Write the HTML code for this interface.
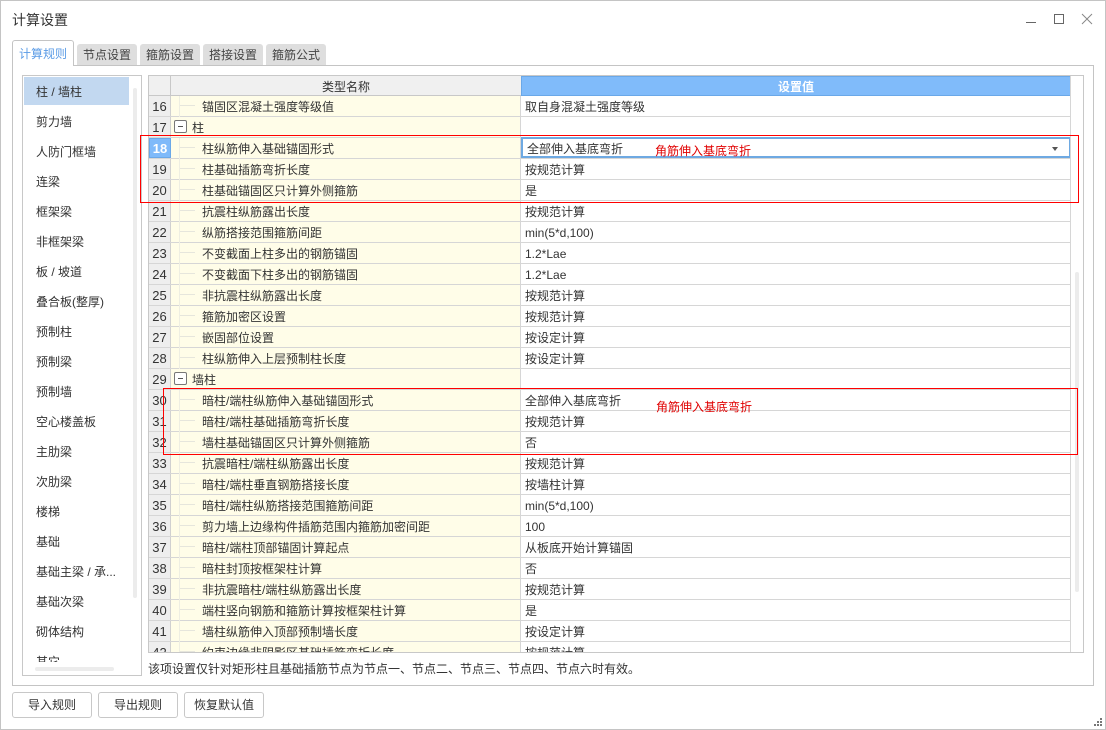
<!DOCTYPE html>
<html lang="zh-CN">
<head>
<meta charset="utf-8">
<title>计算设置</title>
<style>
html,body{margin:0;padding:0;background:#fff}
body{width:1106px;height:730px;overflow:hidden;position:relative;font-family:"Liberation Sans","Noto Sans CJK SC",sans-serif;font-size:12px;color:#333}
.a{position:absolute;box-sizing:border-box}
#win{left:0;top:0;width:1106px;height:730px;border:1px solid #c4c4c4}
.tab{position:absolute;top:44px;width:60px;height:21px;background:#dedede;border-radius:3px 3px 0 0;text-align:center;line-height:22px;color:#444}
#act{left:12px;top:40px;width:62px;height:26px;background:#fff;border:1px solid #c4c4c4;border-bottom:0;border-radius:3px 3px 0 0;text-align:center;line-height:27px;color:#5a9be6;z-index:2}
#panel{left:12px;top:65px;width:1082px;height:621px;border:1px solid #c4c4c4}
#list{left:22px;top:75px;width:120px;height:601px;border:1px solid #c8c8c8;overflow:hidden}
.li{position:absolute;left:13px;height:30px;line-height:33px;white-space:nowrap}
#grid{left:148px;top:75px;width:936px;height:578px;border:1px solid #c8c8c8;overflow:hidden}
#rows{position:absolute;left:0;top:20px;width:922px}
.r{display:flex;height:21px;box-sizing:border-box;border-bottom:1px solid #d6d6d6;line-height:21px}
.n{width:22px;box-sizing:border-box;background:#eeeeee;border-right:1px solid #d0d0d0;text-align:center;font-size:13px;flex:none}
.t{width:350px;height:20px;box-sizing:border-box;background:#fffde8;border-right:1px solid #d6d6d6;flex:none;padding-left:31px;padding-top:1px;position:relative;white-space:nowrap}
.t:before{content:"";position:absolute;left:8px;top:0;width:1px;height:21px;background:#eeeee2}
.t:after{content:"";position:absolute;left:9px;top:9px;width:15px;height:1px;background:#e6e6dc}
.g{padding-left:21px}
.g:before,.g:after{display:none}
.m{position:absolute;left:3px;top:3px;width:13px;height:13px;box-sizing:border-box;border:1px solid #777;border-radius:2px;background:#fff}
.m:after{content:"";position:absolute;left:3px;top:5px;width:5px;height:1px;background:#555}
.v{flex:1;padding-left:4px;padding-top:1px;white-space:nowrap}
.btn{position:absolute;top:692px;width:80px;height:26px;box-sizing:border-box;border:1px solid #c8c8c8;border-radius:3px;text-align:center;line-height:25px;background:#fff}
.red{border:1px solid #f00;z-index:5}
.rt{color:#e00000;z-index:6;white-space:nowrap;line-height:16px}
</style>
</head>
<body>
<div id="win" class="a"></div>
<div class="a" style="left:12px;top:10px;font-size:14px;line-height:20px;color:#333">计算设置</div>
<svg class="a" style="left:1020px;top:10px" width="80" height="20">
<path d="M6 12.500H16" stroke="#666" fill="none"/>
<rect x="34.500" y="4.500" width="9" height="9" stroke="#666" fill="none"/>
<path d="M62 4L72 14M72 4L62 14" stroke="#888" fill="none"/>
</svg>

<div id="panel" class="a"></div>
<div id="act" class="a">计算规则</div>
<div class="tab" style="left:77px">节点设置</div>
<div class="tab" style="left:140px">箍筋设置</div>
<div class="tab" style="left:203px">搭接设置</div>
<div class="tab" style="left:266px">箍筋公式</div>

<div id="list" class="a">
<div class="a" style="left:1px;top:1px;width:105px;height:28px;background:#c2d8f0"></div>
<div class="li" style="top:0">柱 / 墙柱</div>
<div class="li" style="top:30px">剪力墙</div>
<div class="li" style="top:60px">人防门框墙</div>
<div class="li" style="top:90px">连梁</div>
<div class="li" style="top:120px">框架梁</div>
<div class="li" style="top:150px">非框架梁</div>
<div class="li" style="top:180px">板 / 坡道</div>
<div class="li" style="top:210px">叠合板(整厚)</div>
<div class="li" style="top:240px">预制柱</div>
<div class="li" style="top:270px">预制梁</div>
<div class="li" style="top:300px">预制墙</div>
<div class="li" style="top:330px">空心楼盖板</div>
<div class="li" style="top:360px">主肋梁</div>
<div class="li" style="top:390px">次肋梁</div>
<div class="li" style="top:420px">楼梯</div>
<div class="li" style="top:450px">基础</div>
<div class="li" style="top:480px">基础主梁 / 承...</div>
<div class="li" style="top:510px">基础次梁</div>
<div class="li" style="top:540px">砌体结构</div>
<div class="li" style="top:570px">其它</div>
<div class="a" style="left:0;top:586px;width:118px;height:14px;background:#fff"></div>
<div class="a" style="left:110px;top:12px;width:4px;height:510px;background:#ececec;border-radius:2px"></div>
<div class="a" style="left:12px;top:591px;width:79px;height:4px;background:#ececec;border-radius:2px"></div>
</div>

<div id="grid" class="a">
<div class="a" style="left:0;top:0;width:372px;height:20px;background:#f0f0f0;border-bottom:1px solid #c8c8c8;text-align:center;line-height:23px;padding-left:22px">类型名称</div>
<div class="a" style="left:21px;top:0;width:1px;height:20px;background:#c8c8c8"></div>
<div class="a" style="left:372px;top:0;width:550px;height:20px;background:#80bbfa;border:1px solid #6aa8e8;color:#fff;text-align:center;line-height:20px;font-weight:bold">设置值</div>
<div id="rows">
<div class="r"><div class="n">16</div><div class="t">锚固区混凝土强度等级值</div><div class="v">取自身混凝土强度等级</div></div>
<div class="r"><div class="n">17</div><div class="t g"><i class="m"></i>柱</div><div class="v"></div></div>
<div class="r"><div class="n" style="background:#7fbafa;color:#fff;font-weight:bold;border:1px solid #6aa8e8;line-height:19px">18</div><div class="t">柱纵筋伸入基础锚固形式</div><div class="v" style="border:2px solid #6ea9e2;margin:0;padding:0 0 0 4px;line-height:20px;height:21px;box-sizing:border-box;position:relative;top:-1px">全部伸入基底弯折<svg class="a" style="right:10px;top:8px" width="7" height="5"><path d="M0 0H6L3 4Z" fill="#555"/></svg></div></div>
<div class="r"><div class="n">19</div><div class="t">柱基础插筋弯折长度</div><div class="v">按规范计算</div></div>
<div class="r"><div class="n">20</div><div class="t">柱基础锚固区只计算外侧箍筋</div><div class="v">是</div></div>
<div class="r"><div class="n">21</div><div class="t">抗震柱纵筋露出长度</div><div class="v">按规范计算</div></div>
<div class="r"><div class="n">22</div><div class="t">纵筋搭接范围箍筋间距</div><div class="v">min(5*d,100)</div></div>
<div class="r"><div class="n">23</div><div class="t">不变截面上柱多出的钢筋锚固</div><div class="v">1.2*Lae</div></div>
<div class="r"><div class="n">24</div><div class="t">不变截面下柱多出的钢筋锚固</div><div class="v">1.2*Lae</div></div>
<div class="r"><div class="n">25</div><div class="t">非抗震柱纵筋露出长度</div><div class="v">按规范计算</div></div>
<div class="r"><div class="n">26</div><div class="t">箍筋加密区设置</div><div class="v">按规范计算</div></div>
<div class="r"><div class="n">27</div><div class="t">嵌固部位设置</div><div class="v">按设定计算</div></div>
<div class="r"><div class="n">28</div><div class="t">柱纵筋伸入上层预制柱长度</div><div class="v">按设定计算</div></div>
<div class="r"><div class="n">29</div><div class="t g"><i class="m"></i>墙柱</div><div class="v"></div></div>
<div class="r"><div class="n">30</div><div class="t">暗柱/端柱纵筋伸入基础锚固形式</div><div class="v">全部伸入基底弯折</div></div>
<div class="r"><div class="n">31</div><div class="t">暗柱/端柱基础插筋弯折长度</div><div class="v">按规范计算</div></div>
<div class="r"><div class="n">32</div><div class="t">墙柱基础锚固区只计算外侧箍筋</div><div class="v">否</div></div>
<div class="r"><div class="n">33</div><div class="t">抗震暗柱/端柱纵筋露出长度</div><div class="v">按规范计算</div></div>
<div class="r"><div class="n">34</div><div class="t">暗柱/端柱垂直钢筋搭接长度</div><div class="v">按墙柱计算</div></div>
<div class="r"><div class="n">35</div><div class="t">暗柱/端柱纵筋搭接范围箍筋间距</div><div class="v">min(5*d,100)</div></div>
<div class="r"><div class="n">36</div><div class="t">剪力墙上边缘构件插筋范围内箍筋加密间距</div><div class="v">100</div></div>
<div class="r"><div class="n">37</div><div class="t">暗柱/端柱顶部锚固计算起点</div><div class="v">从板底开始计算锚固</div></div>
<div class="r"><div class="n">38</div><div class="t">暗柱封顶按框架柱计算</div><div class="v">否</div></div>
<div class="r"><div class="n">39</div><div class="t">非抗震暗柱/端柱纵筋露出长度</div><div class="v">按规范计算</div></div>
<div class="r"><div class="n">40</div><div class="t">端柱竖向钢筋和箍筋计算按框架柱计算</div><div class="v">是</div></div>
<div class="r"><div class="n">41</div><div class="t">墙柱纵筋伸入顶部预制墙长度</div><div class="v">按设定计算</div></div>
<div class="r"><div class="n">42</div><div class="t">约束边缘非阴影区基础插筋弯折长度</div><div class="v">按规范计算</div></div>
</div>
<div class="a" style="left:921px;top:0;width:1px;height:576px;background:#d6d6d6"></div>
<div class="a" style="left:926px;top:196px;width:4px;height:320px;background:#ececec;border-radius:2px"></div>
</div>

<div class="a" style="left:148px;top:661px;line-height:16px;white-space:nowrap">该项设置仅针对矩形柱且基础插筋节点为节点一、节点二、节点三、节点四、节点六时有效。</div>

<div class="a red" style="left:140px;top:135px;width:939px;height:68px"></div>
<div class="a red" style="left:163px;top:388px;width:915px;height:67px"></div>
<div class="a rt" style="left:655px;top:143px">角筋伸入基底弯折</div>
<div class="a rt" style="left:656px;top:399px">角筋伸入基底弯折</div>

<div class="btn" style="left:12px">导入规则</div>
<div class="btn" style="left:98px">导出规则</div>
<div class="btn" style="left:184px">恢复默认值</div>

<svg class="a" style="left:1094px;top:718px" width="8" height="8">
<path d="M6 0h2v2h-2zM3 3h2v2h-2zM6 3h2v2h-2zM0 6h2v2h-2zM3 6h2v2h-2zM6 6h2v2h-2z" fill="#777"/>
</svg>
</body>
</html>
